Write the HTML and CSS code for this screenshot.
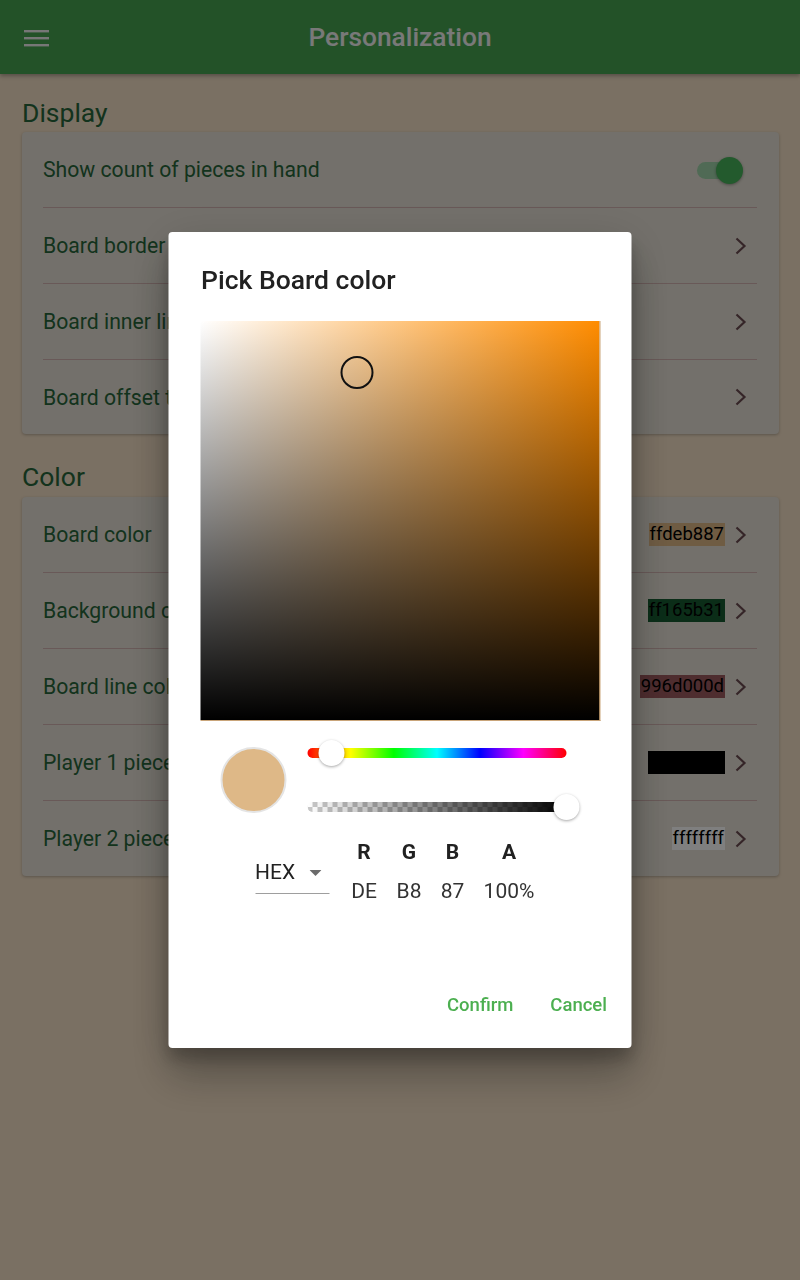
FILE: index.html
```html
<!DOCTYPE html>
<html lang="en">
<head>
<meta charset="utf-8">
<title>Personalization</title>
<link rel="stylesheet" href="styles.css">
</head>
<body>
<header class="appbar">
  <svg class="menu-icon" width="26" height="18" viewBox="0 0 26 18"><rect x="0" y="1" width="25" height="2.4" fill="currentColor"/><rect x="0" y="8" width="25" height="2.4" fill="currentColor"/><rect x="0" y="15" width="25" height="2.4" fill="currentColor"/></svg>
  <h1 class="appbar-title">Personalization</h1>
</header>

<main class="content">
  <h2 class="section-title section-first">Display</h2>
  <section class="card card-display">
    <div class="row"><span class="row-label">Show count of pieces in hand</span>
      <span class="toggle"><span class="toggle-track"></span><span class="toggle-thumb"></span></span>
    </div>
    <div class="row"><span class="row-label">Board border line width</span>
      <svg class="chev" width="24" height="24" viewBox="0 0 24 24"><path d="M7.5 4.5l8 7.5-8 7.5" fill="none" stroke="currentColor" stroke-width="2.2"/></svg></div>
    <div class="row"><span class="row-label">Board inner line width</span>
      <svg class="chev" width="24" height="24" viewBox="0 0 24 24"><path d="M7.5 4.5l8 7.5-8 7.5" fill="none" stroke="currentColor" stroke-width="2.2"/></svg></div>
    <div class="row"><span class="row-label">Board offset to screen edge</span>
      <svg class="chev" width="24" height="24" viewBox="0 0 24 24"><path d="M7.5 4.5l8 7.5-8 7.5" fill="none" stroke="currentColor" stroke-width="2.2"/></svg></div>
  </section>

  <h2 class="section-title section-next">Color</h2>
  <section class="card">
    <div class="row"><span class="row-label">Board color</span>
      <span class="chip chip-board">ffdeb887</span>
      <svg class="chev" width="24" height="24" viewBox="0 0 24 24"><path d="M7.5 4.5l8 7.5-8 7.5" fill="none" stroke="currentColor" stroke-width="2.2"/></svg></div>
    <div class="row"><span class="row-label">Background color</span>
      <span class="chip chip-bg">ff165b31</span>
      <svg class="chev" width="24" height="24" viewBox="0 0 24 24"><path d="M7.5 4.5l8 7.5-8 7.5" fill="none" stroke="currentColor" stroke-width="2.2"/></svg></div>
    <div class="row"><span class="row-label">Board line color</span>
      <span class="chip chip-line">996d000d</span>
      <svg class="chev" width="24" height="24" viewBox="0 0 24 24"><path d="M7.5 4.5l8 7.5-8 7.5" fill="none" stroke="currentColor" stroke-width="2.2"/></svg></div>
    <div class="row"><span class="row-label">Player 1 piece color</span>
      <span class="chip chip-black">ff000000</span>
      <svg class="chev" width="24" height="24" viewBox="0 0 24 24"><path d="M7.5 4.5l8 7.5-8 7.5" fill="none" stroke="currentColor" stroke-width="2.2"/></svg></div>
    <div class="row"><span class="row-label">Player 2 piece color</span>
      <span class="chip chip-white">ffffffff</span>
      <svg class="chev" width="24" height="24" viewBox="0 0 24 24"><path d="M7.5 4.5l8 7.5-8 7.5" fill="none" stroke="currentColor" stroke-width="2.2"/></svg></div>
  </section>
</main>

<div class="scrim">
  <div class="dialog" role="dialog">
    <h3 class="dialog-title">Pick Board color</h3>
    <div class="sv-area">
      <span class="sv-cursor"></span>
    </div>
    <div class="picker-row">
      <span class="preview"></span>
      <div class="sliders">
        <div class="slider">
          <span class="track hue-track"></span>
          <span class="thumb thumb-hue"></span>
        </div>
        <div class="slider">
          <span class="track alpha-track"></span>
          <span class="thumb thumb-alpha"></span>
        </div>
      </div>
    </div>
    <div class="values-row">
      <div class="mode-select"><span class="mode-text">HEX</span><svg class="caret" width="12" height="8" viewBox="0 0 12 8"><path d="M0 1h12L6 7z" fill="currentColor"/></svg></div>
      <div class="channels">
        <span class="ch-head">R</span><span class="ch-head">G</span><span class="ch-head">B</span><span class="ch-head">A</span>
        <span class="ch-val">DE</span><span class="ch-val">B8</span><span class="ch-val">87</span><span class="ch-val">100%</span>
      </div>
    </div>
    <div class="actions">
      <button class="btn">Confirm</button>
      <button class="btn">Cancel</button>
    </div>
  </div>
</div>
</body>
</html>
```

FILE: styles.css
```css
* { box-sizing: border-box; }

html, body {
  margin: 0;
  padding: 0;
}

body {
  width: 800px;
  height: 1280px;
  background: #f4e0c6;
  font-family: Roboto, "Noto Sans", "Liberation Sans", sans-serif;
  overflow: hidden;
}

.appbar {
  height: 74px;
  background: #47a551;
  display: flex;
  align-items: center;
  box-shadow: 0 2px 4px rgba(0,0,0,.3);
  padding: 0 24px;
}

.menu-icon {
  color: #efefef;
  margin-top: 1px;
  flex: none;
}

.appbar-title {
  flex: 1;
  margin: 0;
  text-align: center;
  font-size: 26.3px;
  font-weight: 500;
  color: #f2f2f2;
}

.appbar::after { content: ""; width: 26px; flex: none; }

.content {
  padding: 0 21px 0 22px;
}

.section-title {
  margin: 0;
  font-size: 26.5px;
  font-weight: 400;
  line-height: 32px;
  color: #26663a;
}

.section-first { padding-top: 23px; margin-bottom: 3px; }
.section-next { padding-top: 27px; margin-bottom: 4px; }

.card {
  background: #e6e1d6;
  border-radius: 4px;
  box-shadow: 0 1px 3px rgba(0,0,0,.25);
  padding: 0 22px 0 21px;
}

.row {
  height: 76px;
  display: flex;
  align-items: center;
  border-bottom: 1px solid #d2b3b0;
  padding-right: 4px;
}

.row:last-child { border-bottom: none; height: 75px; }
.card-display .row:last-child { height: 74px; }

.row-label {
  flex: 1;
  font-size: 21.2px;
  color: #26663a;
  white-space: nowrap;
  overflow: hidden;
}

.chev {
  color: #6a4a50;
  flex: none;
  margin-left: 4px;
}

.chip {
  font-size: 18.5px;
  line-height: 23px;
  padding: 0 1px;
  color: #000;
}

.chip-board { background: #deb887; }
.chip-bg { background: #165b31; }
.chip-line { background: rgba(109, 0, 13, 0.6); }
.chip-black { background: #000; }
.chip-white { background: #fff; }

.toggle {
  position: relative;
  width: 48px;
  height: 28px;
  margin-right: 10px;
}

.toggle-track {
  position: absolute;
  left: 2px;
  top: 6px;
  width: 42px;
  height: 17px;
  border-radius: 9px;
  background: #a0d4aa;
}

.toggle-thumb {
  position: absolute;
  left: 21px;
  top: 1px;
  width: 27px;
  height: 27px;
  border-radius: 50%;
  background: #47b45a;
  box-shadow: 0 1px 3px rgba(0,0,0,.35);
}

/* Dialog */

.scrim {
  position: fixed;
  inset: 0;
  background: rgba(0,0,0,.5);
  display: flex;
  align-items: center;
  justify-content: center;
}

.dialog {
  width: 463px;
  height: 816px;
  background: #fff;
  border-radius: 4px;
  padding: 33px 24px 31px 32px;
  display: flex;
  flex-direction: column;
  box-shadow: 0 30px 40px rgba(0,0,0,.22), 0 9px 46px rgba(0,0,0,.14), 0 11px 15px rgba(0,0,0,.2);
  transform: translateX(-0.5px);
}

.dialog-title {
  margin: 0 0 27px 1px;
  font-size: 26.5px;
  line-height: 29px;
  font-weight: 500;
  color: #212121;
}

.sv-area {
  position: relative;
  width: 400px;
  height: 400px;
  flex: none;
  background:
    linear-gradient(to top, #000, rgba(0,0,0,0)),
    linear-gradient(to right, #fff, hsl(33, 100%, 50%));
  border-right: 1px solid #c9a57a;
  border-bottom: 1px solid #c9a57a;
}

.sv-cursor {
  position: absolute;
  left: 140px;
  top: 35px;
  width: 33px;
  height: 33px;
  border: 2px solid #111;
  border-radius: 50%;
}

.picker-row {
  margin-top: 19px;
  height: 80px;
  display: flex;
  align-items: center;
  padding-left: 20px;
  gap: 21px;
}

.preview {
  width: 66px;
  height: 66px;
  border-radius: 50%;
  background: #deb887;
  border: 2px solid #e4e4e4;
  flex: none;
}

.sliders {
  width: 272px;
  padding-right: 13px;
  display: flex;
  flex-direction: column;
  gap: 28px;
}

.slider {
  position: relative;
  height: 26px;
  display: flex;
  align-items: center;
}

.track {
  display: block;
  width: 100%;
  height: 10px;
  border-radius: 5px;
}

.hue-track {
  background: linear-gradient(to right, #f00 0%, #ff0 16.66%, #0f0 33.33%, #0ff 50%, #00f 66.66%, #f0f 83.33%, #f00 100%);
}

.alpha-track {
  border-radius: 5px 0 0 5px;
  background:
    linear-gradient(to right, rgba(0,0,0,0) 0%, rgba(0,0,0,1) 100%),
    repeating-conic-gradient(#c8c8c8 0 25%, #ffffff 0 50%) 0 0 / 10px 10px;
}

.thumb {
  position: absolute;
  top: 0;
  width: 26px;
  height: 26px;
  border-radius: 50%;
  background: #fff;
  box-shadow: 0 1px 3px rgba(0,0,0,.35);
}

.thumb-hue { left: 11px; }
.thumb-alpha { left: 246px; }

.values-row {
  margin-top: 20px;
  display: flex;
  gap: 12px;
  padding-left: 55px;
}

.mode-select {
  width: 74px;
  height: 34px;
  margin-top: 20px;
  border-bottom: 1px solid #9e9e9e;
  display: flex;
  align-items: flex-start;
  justify-content: space-between;
  color: #222;
}

.mode-text {
  font-size: 21px;
  line-height: 24px;
}

.caret {
  color: #6b6b6b;
  margin-top: 9px;
  margin-right: 8px;
}

.channels {
  display: grid;
  grid-template-columns: 46px 44px 43px 70px;
  grid-template-rows: 24px 24px;
  row-gap: 15px;
  text-align: center;
}

.ch-head {
  font-size: 21px;
  line-height: 24px;
  font-weight: 700;
  color: #212121;
}

.ch-val {
  font-size: 21px;
  line-height: 24px;
  color: #333;
}

.actions {
  margin-top: 90px;
  display: flex;
  justify-content: flex-end;
  gap: 37px;
}

.btn {
  border: none;
  background: none;
  padding: 0;
  font-family: Roboto, "Noto Sans", "Liberation Sans", sans-serif;
  font-size: 18.5px;
  line-height: 24px;
  font-weight: 500;
  color: #4caf50;
}
```
